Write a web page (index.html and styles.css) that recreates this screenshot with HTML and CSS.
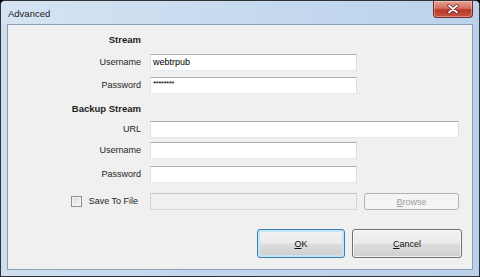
FILE: index.html
```html
<!DOCTYPE html>
<html>
<head>
<meta charset="utf-8">
<link rel="stylesheet" href="styles.css">
</head>
<body>
<div class="window">
  <div class="titlebar">
    <span class="title">Advanced</span>
    <div class="close">
      <svg width="12" height="10" viewBox="0 0 12 10"><path d="M2 1.5 L10 8.5 M10 1.5 L2 8.5" stroke="#5a1a1a" stroke-width="3.2" stroke-linecap="round"/><path d="M2 1.5 L10 8.5 M10 1.5 L2 8.5" stroke="#ffffff" stroke-width="1.8" stroke-linecap="round"/></svg>
    </div>
  </div>
  <div class="client">
    <div class="form">
      <div class="row head r-stream"><span class="label bold">Stream</span></div>
      <div class="row r-user1"><span class="label">Username</span><div class="input">webtrpub</div></div>
      <div class="row r-std"><span class="label">Password</span><div class="input pw">********</div></div>
      <div class="row head r-std"><span class="label bold">Backup Stream</span></div>
      <div class="row r-url"><span class="label">URL</span><div class="input wide"></div></div>
      <div class="row r-url"><span class="label">Username</span><div class="input"></div></div>
      <div class="row r-pass2"><span class="label">Password</span><div class="input"></div></div>
      <div class="row r-save">
        <span class="label save"><span class="check"></span>Save To File</span>
        <div class="input disabled"></div>
        <div class="btn small disabled-btn"><u>B</u>rowse</div>
      </div>
    </div>
    <div class="buttons">
      <div class="btn big ok"><u>O</u>K</div>
      <div class="btn big cancel"><u>C</u>ancel</div>
    </div>
  </div>
</div>
</body>
</html>
```
FILE: styles.css
```css
* { box-sizing: border-box; }
html, body { margin: 0; padding: 0; background: #000; }
body { width: 480px; height: 277px; overflow: hidden; font-family: "Liberation Sans", Arial, sans-serif; font-size: 9px; color: #000; }
.window {
  width: 480px; height: 277px;
  border: 1px solid #2f3338;
  border-radius: 5px 5px 0 0;
  background: linear-gradient(90deg, #cfdff0 0%, #c2d7ed 40%, #b9d1ea 100%);
  display: flex; flex-direction: column;
}
.titlebar {
  height: 23px; flex: none;
  display: flex; justify-content: space-between; align-items: flex-start;
  padding-left: 7px; padding-right: 6px;
  background: linear-gradient(90deg, #d6e4f2 0%, #c8dbef 45%, #bad2eb 100%);
  border-radius: 4px 4px 0 0;
}
.title { font-size: 9.5px; line-height: 23px; color: #1b1b1b; padding-top: 1px; }
.close {
  width: 40px; height: 17px;
  border: 1px solid #7a2626; border-top: none;
  border-radius: 0 0 4px 4px;
  background: linear-gradient(180deg, #e8a093 0%, #d1705f 45%, #b83a2a 55%, #c9523f 100%);
  display: flex; align-items: center; justify-content: center;
  box-shadow: inset 0 0 0 1px rgba(255,255,255,0.35);
}
.client {
  flex: 1;
  margin: 0 6px 6px 6px;
  border: 1px solid #8ba0b8;
  background: #f0f0f0;
  display: flex; flex-direction: column;
}
.form { display: flex; flex-direction: column; }
.row { display: flex; align-items: center; height: 17px; margin-top: 6px; }
.r-stream { margin-top: 6px; }
.r-user1 { margin-top: 6px; }
.r-std { margin-top: 6px; }
.r-url { margin-top: 4px; }
.r-pass2 { margin-top: 7px; }
.r-save { margin-top: 10px; }
.label { width: 133px; text-align: right; margin-right: 9px; line-height: 17px; color: #1e1e1e; }
.bold { font-weight: bold; font-size: 9.5px; }
.input {
  width: 207px; height: 17px;
  background: #fff;
  border: 1px solid;
  border-color: #abadb3 #dbdfe6 #e3e9ef #e2e3ea;
  line-height: 15px; padding-left: 2px;
  font-size: 9px;
}
.input.pw { font-size: 8px; letter-spacing: -0.5px; line-height: 12px; }
.input.wide { width: 309px; }
.input.disabled { background: #f0f0f0; border-color: #c4c4c4 #d5d5d5 #d9d9d9 #d5d5d5; }
.save { display: flex; align-items: center; justify-content: flex-end; padding-right: 3px; }
.check {
  width: 11px; height: 11px; margin-right: 7px;
  border: 1px solid #8e8f8f;
  background: linear-gradient(135deg, #dcdcdc 0%, #f6f6f6 100%);
  box-shadow: inset 0 0 0 1px #f4f4f4;
}
.btn {
  display: flex; align-items: center; justify-content: center;
  border: 1px solid #707070; border-radius: 3px;
  background: linear-gradient(180deg, #f2f2f2 0%, #ebebeb 48%, #dddddd 52%, #cfcfcf 100%);
  box-shadow: inset 0 0 0 1px rgba(255,255,255,0.7);
  color: #111; font-size: 9px;
}
.btn u { text-decoration: underline; }
.small { width: 95px; height: 17px; margin-left: 7px; }
.disabled-btn { background: #f4f4f4; border-color: #adb2b5; color: #a0a0a0; box-shadow: none; }
.buttons { display: flex; justify-content: flex-end; gap: 7px; padding-right: 10px; margin-top: 19px; }
.big { height: 29px; }
.ok { width: 88px; border-color: #3c7fb1; box-shadow: inset 0 0 0 2px #c2e5f7; }
.cancel { width: 110px; }
```
